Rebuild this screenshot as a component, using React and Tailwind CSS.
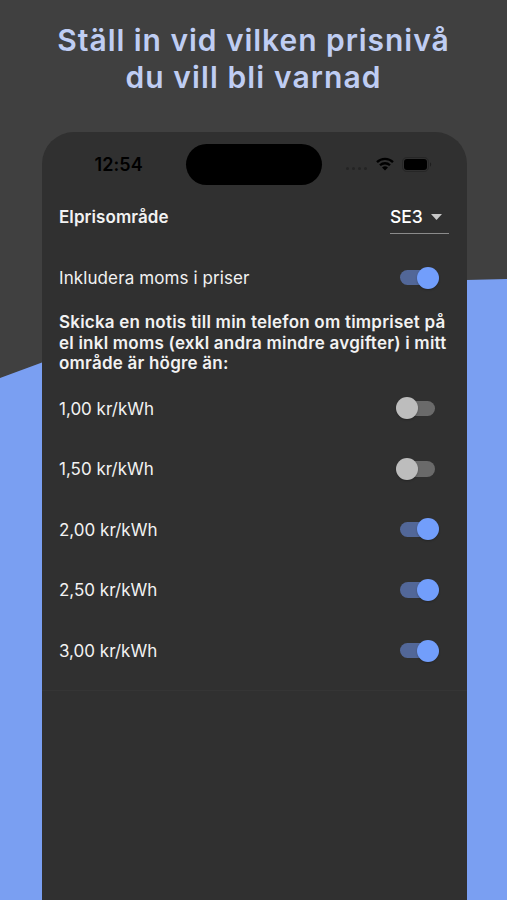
import React, { useState } from "react";

const LEVELS = [
  { label: "1,00 kr/kWh", on: false },
  { label: "1,50 kr/kWh", on: false },
  { label: "2,00 kr/kWh", on: true },
  { label: "2,50 kr/kWh", on: true },
  { label: "3,00 kr/kWh", on: true },
];

const Toggle = ({ on, onClick }) => (
  <button
    type="button"
    role="switch"
    aria-checked={on}
    onClick={onClick}
    className={`mr-[10px] flex h-[22px] w-[43px] items-center ${on ? "justify-end" : "justify-start"}`}
  >
    {/* the thumb is pulled back over the end of the track */}
    {on && <span className="-mr-[18px] h-[15.5px] w-[35.5px] rounded-full bg-[#526798]" />}
    <span
      className={`relative h-[22px] w-[22px] shrink-0 rounded-full shadow-[0_1px_2px_rgba(0,0,0,0.25)] ${on ? "bg-[#729efb]" : "bg-[#bdbdbd]"}`}
    />
    {!on && <span className="-ml-[18px] h-[15.5px] w-[35px] shrink-0 rounded-full bg-[#6a6a6a]" />}
  </button>
);

const StatusBar = () => (
  <div className="flex h-[40.5px] items-center">
    <span className="w-[144.5px] pl-[53px] text-[18px] font-semibold tracking-[0.1px] text-black">12:54</span>
    <div className="h-[40.5px] w-[136px] shrink-0 rounded-full bg-black" />
    <div className="ml-[24px] mt-[9px] flex gap-[3px]">
      {[0, 1, 2, 3].map((i) => (
        <span key={i} className="h-[3px] w-[3px] rounded-full bg-[#242424]" />
      ))}
    </div>
    <svg className="ml-[9px] h-[14px] w-[18px]" viewBox="0 0 18 14" fill="none" stroke="#000" strokeWidth="2.3">
      <path d="M1 5.1a11.4 11.4 0 0 1 16 0" />
      <path d="M4 8.3a7.1 7.1 0 0 1 10 0" />
      <path d="M9 13.6 6 10.6a4.3 4.3 0 0 1 6 0z" fill="#000" stroke="none" />
    </svg>
    <svg className="ml-[7.5px] h-[15px] w-[30px]" viewBox="0 0 30 15">
      <rect x="0.5" y="0.5" width="26" height="14" rx="4.2" fill="none" stroke="#262626" />
      <rect x="2" y="2" width="23" height="11" rx="3" fill="#000" />
      <path d="M28 5.3v4.4c1.6-.8 1.6-3.6 0-4.4z" fill="#1e1e1e" />
    </svg>
  </div>
);

export default function App() {
  const [vat, setVat] = useState(true);
  const [levels, setLevels] = useState(LEVELS);

  const toggleLevel = (index) => {
    setLevels(levels.map((l, i) => (i === index ? { ...l, on: !l.on } : l)));
  };

  return (
    <div className="relative h-[900px] w-[507px] overflow-hidden bg-[#404040] font-['Inter',sans-serif]">
      {/* blue backdrop shape */}
      <svg className="absolute inset-0 h-full w-full" viewBox="0 0 507 900">
        <path d="M0 378 42 362.5 260 282 466 280 507 279V900H0z" fill="#7a9ff2" />
      </svg>

      <div className="relative flex h-full flex-col">
        <h1 className="flex h-[132px] shrink-0 flex-col items-center pt-[22px] text-[30px] font-semibold leading-[37px] text-[#bfcdf3]">
          <span className="whitespace-nowrap tracking-[0.95px]">Ställ in vid vilken prisnivå</span>
          <span className="whitespace-nowrap tracking-[1.1px]">du vill bli varnad</span>
        </h1>

        <main className="ml-[41.5px] w-[425px] flex-1 rounded-t-[32px] bg-[#303030] pt-[12px] text-[#f2f2f2]">
          <StatusBar />

          <div className="px-[17.5px]">
            <div className="mt-[17px] flex h-[32px] items-center justify-between">
              <span className="text-[17px] font-semibold tracking-[0.08px]">Elprisområde</span>
              <button type="button" className="flex h-[32px] w-[59px] items-center border-b-[1.5px] border-[#8b8b8b]">
                <span className="text-[17.5px] font-medium text-white">SE3</span>
                <svg className="ml-[8px] h-[6px] w-[11px]" viewBox="0 0 11 6">
                  <path d="M0 0h11L5.5 6z" fill="#c8c8c8" />
                </svg>
              </button>
            </div>

            <div className="mt-[14px] flex h-[60px] items-center justify-between">
              <span className="pt-[2px] text-[17px] tracking-[0.1px]">Inkludera moms i priser</span>
              <Toggle on={vat} onClick={() => setVat(!vat)} />
            </div>

            <p className="mt-[4.5px] text-[17px] font-semibold leading-[20.5px] tracking-[0.22px]">
              <span className="block whitespace-nowrap">Skicka en notis till min telefon om timpriset på</span>
              <span className="block whitespace-nowrap">el inkl moms (exkl andra mindre avgifter) i mitt</span>
              <span className="block whitespace-nowrap">område är högre än:</span>
            </p>

            <ul className="mt-[4.5px]">
              {levels.map((level, i) => (
                <li key={level.label} className="flex h-[60.6px] items-center justify-between">
                  <span className="pt-[2px] text-[17px]">{level.label}</span>
                  <Toggle on={level.on} onClick={() => toggleLevel(i)} />
                </li>
              ))}
            </ul>
          </div>
          <hr className="mt-[9px] border-[#353535]" />
        </main>
      </div>
    </div>
  );
}
